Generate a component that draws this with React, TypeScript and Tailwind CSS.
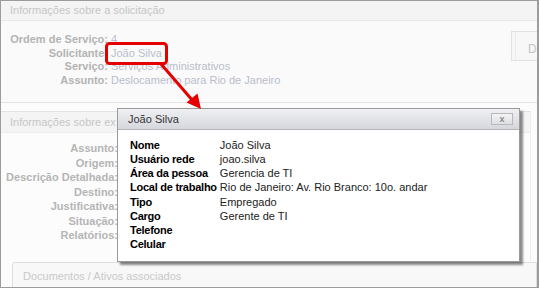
import React from 'react';

type Row = { label: string; value: string };

const requestRows: Row[] = [
  { label: 'Ordem de Serviço:', value: '4' },
  { label: 'Solicitante:', value: 'João Silva' },
  { label: 'Serviço:', value: 'Serviços Administrativos' },
  { label: 'Assunto:', value: 'Deslocamento para Rio de Janeiro' },
];

const execRows = ['Assunto:', 'Origem:', 'Descrição Detalhada:', 'Destino:', 'Justificativa:', 'Situação:', 'Relatórios:'];

const person: Row[] = [
  { label: 'Nome', value: 'João Silva' },
  { label: 'Usuário rede', value: 'joao.silva' },
  { label: 'Área da pessoa', value: 'Gerencia de TI' },
  { label: 'Local de trabalho', value: 'Rio de Janeiro: Av. Rio Branco: 10o. andar' },
  { label: 'Tipo', value: 'Empregado' },
  { label: 'Cargo', value: 'Gerente de TI' },
  { label: 'Telefone', value: '' },
  { label: 'Celular', value: '' },
];

// popup with the requester's details
const PersonPopup = () => (
  <div className="absolute left-[116px] top-[107px] w-[403px] h-[154px] bg-white border border-[#9a9a9a] shadow-[3px_3px_2px_rgba(0,0,0,0.45)]">
    <div className="h-[21px] flex items-center justify-between pl-[10px] pr-[6px] bg-gradient-to-b from-[#eef0f3] to-[#d5d7dd] border-b border-[#b4b4b8]">
      <span className="text-[#333]">João Silva</span>
      <button className="w-[22px] h-[12px] flex items-center justify-center border border-[#b9b9bd] bg-gradient-to-b from-[#f4f4f6] to-[#dedfe3] text-[#8a8a8a] text-[9px] leading-none font-bold">
        x
      </button>
    </div>
    <table className="mt-[8px] ml-[12px] border-collapse">
      <tbody>
        {person.map((r) => (
          <tr key={r.label} className="h-[14.15px] leading-[14.15px]">
            <td className="font-bold text-black pr-[3px] whitespace-nowrap tracking-[-0.25px]">{r.label}</td>
            <td className="text-[#222] whitespace-nowrap">{r.value}</td>
          </tr>
        ))}
      </tbody>
    </table>
  </div>
);

const App = () => {
  return (
    <div className="w-[539px] h-[288px] relative overflow-hidden bg-[#fcfcfc] border border-r-2 border-[#9c9c9c] font-['Liberation_Sans',Arial,sans-serif] text-[11px]">
      {/* section 1 */}
      <div className="h-[102px] flex flex-col bg-[#fafafa] border-b border-[#e4e4e4]">
        <div className="h-[20px] shrink-0 flex items-center pl-[9px] bg-[#f4f4f4] border-b border-[#e8e8e8] text-[#c6c6c6]">
          Informações sobre a solicitação
        </div>
        <div className="flex justify-between">
          <div className="pt-[12px]">
            {requestRows.map((r) => (
              <div key={r.label} className="flex h-[13.7px] leading-[13.7px]">
                <span className="w-[107px] text-right font-bold text-[#b3b3b3] whitespace-nowrap">{r.label}</span>
                <span className="pl-[3px] text-[#b9bdcc] whitespace-nowrap">{r.value}</span>
              </div>
            ))}
          </div>
          <div className="mt-[10px] mr-[-14px] w-[40px] h-[30px] border border-[#e2e2e2] bg-[#f7f7f7] flex">
            <div className="w-[4px] border-r border-[#ececec]" />
            <div className="flex-1 flex items-end pb-[2px] pl-[12px] text-[#c4c4c4] text-[12px]">D</div>
          </div>
        </div>
      </div>

      {/* section 2 */}
      <div className="mt-[8px] h-[150px] flex flex-col border-t border-[#e2e2e2] border-r border-r-[#ededed] mr-[6px]">
        <div className="h-[21px] shrink-0 flex items-center pl-[9px] bg-[#f4f4f4] border-b border-[#ececec] text-[#c6c6c6]">
          <span className="w-[106px] overflow-hidden whitespace-nowrap">Informações sobre execução</span>
        </div>
        <div className="pt-[8px]">
          {execRows.map((l) => (
            <div key={l} className="h-[14.5px] leading-[14.5px] w-[117px] text-right font-bold text-[#b5b5b5] whitespace-nowrap">
              {l}
            </div>
          ))}
        </div>
      </div>

      {/* documents */}
      <div className="ml-[11px] mt-[1px] h-[40px] border border-[#dedede] rounded-tl-[3px] bg-[#f8f8f8] pl-[10px] pt-[5px] text-[#c9c9c9]">
        Documentos / Ativos associados
      </div>

      <PersonPopup />

      {/* red highlight and arrow */}
      <svg className="absolute left-0 top-0 pointer-events-none" width="539" height="288">
        <rect x="105.5" y="42.5" width="60" height="20" rx="3" fill="none" stroke="#e50000" strokeWidth="3" />
        <line x1="160" y1="63" x2="192" y2="100" stroke="#e50000" strokeWidth="3" />
        <polygon points="200,108 185.5,101.5 196.5,92.5" fill="#e50000" />
      </svg>
    </div>
  );
};

export default App;
